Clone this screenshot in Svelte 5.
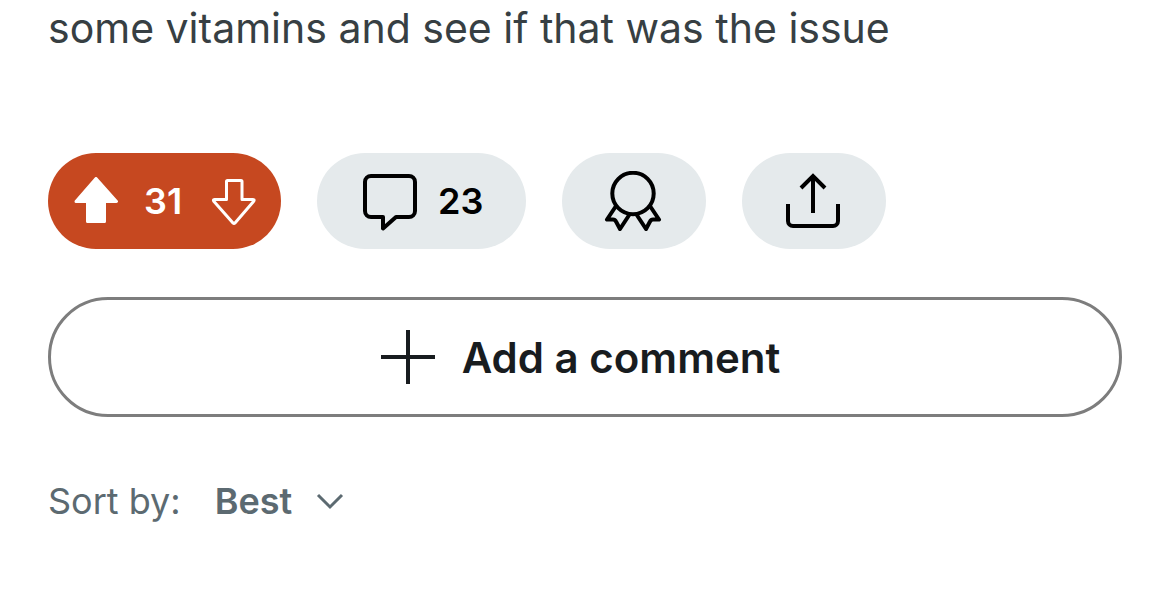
<script lang="ts">
  let score = $state(31);
  let vote = $state(1);
  let sort = $state('Best');

  const comments = 23;
  const sorts = ['Best', 'Top', 'New', 'Old'];

  function cast(dir: number) {
    const next = vote === dir ? 0 : dir;
    score += next - vote;
    vote = next;
  }
</script>

<main class="post">
  <p class="body-text">some vitamins and see if that was the issue</p>

  <div class="actions">
    <div class="pill votes">
      <button class="vote" aria-label="Upvote" aria-pressed={vote === 1} onclick={() => cast(1)}>
        <svg class="arrow" viewBox="0 0 48 48" aria-hidden="true">
          <path d="M24 1.500 44.500 24.500H32.500V44.500H15.500V24.500H4Z" fill={vote === 1 ? 'currentColor' : 'none'} />
        </svg>
      </button>
      <span class="count">{score}</span>
      <button class="vote" aria-label="Downvote" aria-pressed={vote === -1} onclick={() => cast(-1)}>
        <svg class="arrow" viewBox="0 0 48 48" aria-hidden="true">
          <path d="M17.5 3.5H31Q32 3.5 32 4.5V22.5H43Q45 22.5 43.5 24.5L25 46Q24 47 23 46L4 24.5Q2.5 22.5 4.5 22.5H16.5V4.5Q16.5 3.5 17.5 3.5Z" fill={vote === -1 ? 'currentColor' : 'none'} />
        </svg>
      </button>
    </div>

    <button class="pill comments" aria-label="{comments} comments">
      <svg class="icon" viewBox="0 0 60 60" aria-hidden="true">
        <path d="M11 5H49A6 6 0 0 1 55 11V40A6 6 0 0 1 49 46H36L23 57.5V46H11A6 6 0 0 1 5 40V11A6 6 0 0 1 11 5Z" />
      </svg>
      <span class="count">{comments}</span>
    </button>

    <button class="pill square" aria-label="Give award">
      <svg class="icon" viewBox="0 0 60 60" aria-hidden="true">
        <circle cx="29" cy="22.5" r="20.7" />
        <path d="M12 35 3 48.5H9Q11 48.5 12 50.500L16 58 25.500 43.500M46 35 55 48.5H49Q47 48.5 46 50.500L42 58 32.500 43.500" />
      </svg>
    </button>

    <button class="pill square" aria-label="Share">
      <svg class="icon share" viewBox="0 0 60 60" aria-hidden="true">
        <path d="M29 42V5M17 17 29 5 41 17M4 33V50A5 5 0 0 0 9 55H49A5 5 0 0 0 54 50V33" />
      </svg>
    </button>
  </div>

  <button class="add-comment">
    <svg class="icon plus" viewBox="0 0 60 60" aria-hidden="true">
      <path d="M30 3V57M3 30H57" />
    </svg>
    <span>Add a comment</span>
  </button>

  <div class="sort">
    <label for="sort">Sort by:</label>
    <div class="picker">
      <select id="sort" bind:value={sort}>
        {#each sorts as option}
          <option>{option}</option>
        {/each}
      </select>
      <svg class="chevron" viewBox="0 0 28 28" aria-hidden="true">
        <path d="M2 8 14 20 26 8" />
      </svg>
    </div>
  </div>
</main>

<style>
  :global(body) {
    margin: 0;
    background: #fff;
  }
  .post {
    padding: 0 48px;
    font-family: Inter, 'Liberation Sans', sans-serif;
    color: #373f43;
  }
  .body-text {
    margin: 0 0 97px;
    font-size: 41px;
    line-height: 56px;
  }
  button,
  select {
    font: inherit;
    color: inherit;
    border: 0;
    padding: 0;
    background: none;
    cursor: pointer;
  }
  .actions {
    display: flex;
    flex-wrap: wrap;
    gap: 36px;
    margin-bottom: 48px;
  }
  .pill {
    display: flex;
    align-items: center;
    height: 96px;
    border-radius: 48px;
    background: #e5eaec;
    color: #000;
  }
  .votes {
    gap: 24px;
    padding: 0 23px 0 24px;
    background: #c64820;
    color: #fff;
  }
  .vote {
    display: flex;
  }
  .comments {
    gap: 18px;
    padding: 0 43px;
  }
  .square {
    padding: 0 42px;
  }
  .count {
    min-width: 42px;
    font-size: 36px;
    line-height: 48px;
    font-weight: 600;
  }
  svg {
    display: block;
    flex: none;
    fill: none;
    stroke: currentColor;
    stroke-width: 4;
    stroke-linejoin: round;
  }
  .arrow {
    width: 48px;
    height: 48px;
    stroke-width: 3;
  }
  .icon {
    width: 60px;
    height: 60px;
  }
  .share {
    stroke-linejoin: miter;
  }
  .add-comment {
    display: flex;
    align-items: center;
    justify-content: center;
    gap: 24px;
    box-sizing: border-box;
    width: 100%;
    height: 120px;
    margin-bottom: 56px;
    padding-right: 12px;
    border: 3px solid #7d7d7d;
    border-radius: 60px;
    font-size: 42px;
    font-weight: 600;
    color: #181c1f;
  }
  .sort {
    display: flex;
    align-items: center;
    gap: 34px;
    height: 56px;
    font-size: 36px;
    color: #5c6a71;
  }
  .picker {
    display: flex;
    align-items: center;
    gap: 24px;
  }
  select {
    appearance: none;
    field-sizing: content;
    font-weight: 600;
  }
  .chevron {
    width: 28px;
    height: 28px;
    stroke-width: 3;
    stroke-linejoin: miter;
  }
</style>
